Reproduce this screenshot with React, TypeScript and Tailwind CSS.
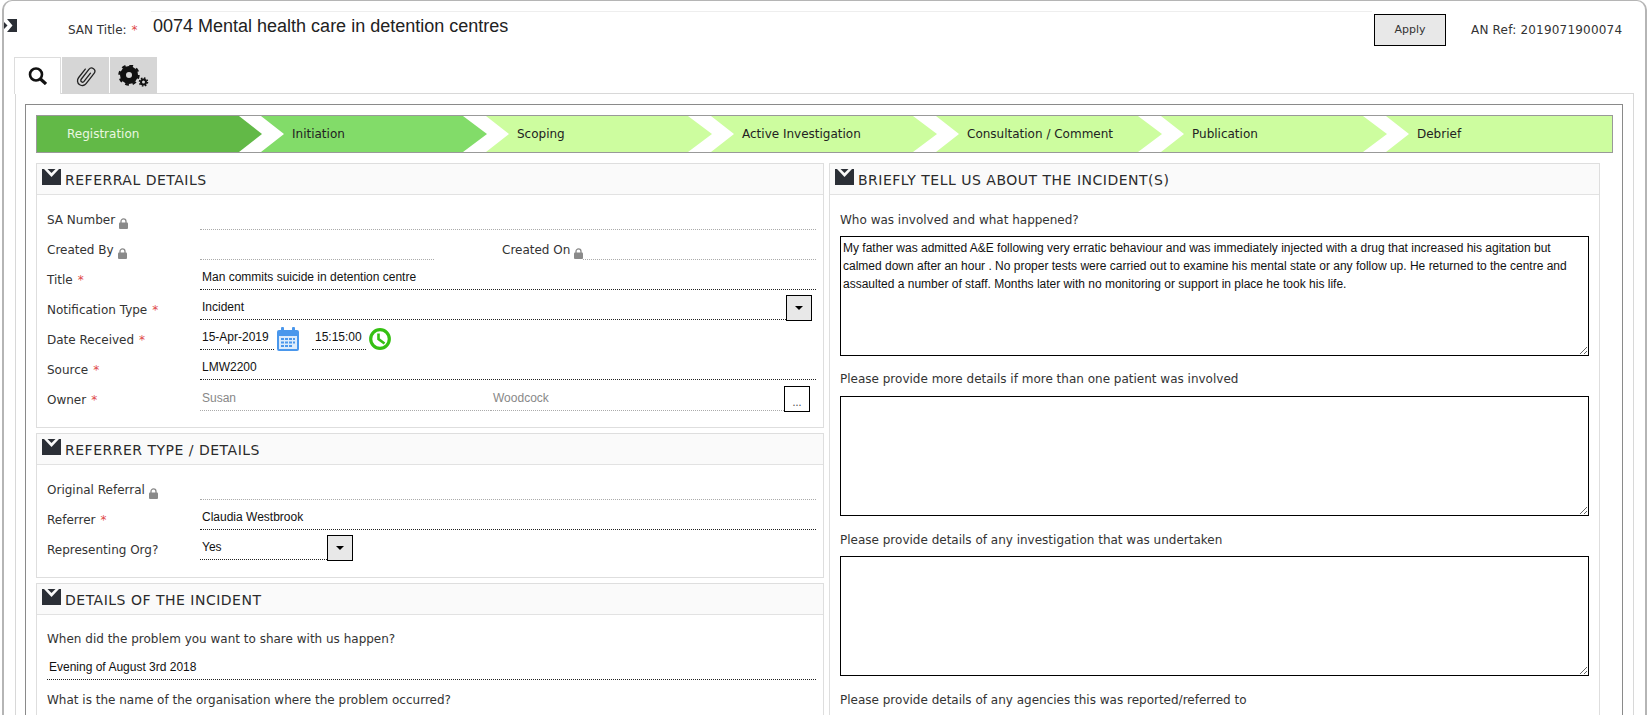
import type { ReactNode } from "react";

const labelFont = "font-['DejaVu_Sans',Verdana,sans-serif]";
const valueFont = "font-['Liberation_Sans',Arial,sans-serif]";

function Req() {
  return <span className="text-[#e04848] ml-[5px]">*</span>;
}

function Lock() {
  return (
    <svg width="9" height="11" viewBox="0 0 9 11" className="inline-block ml-[4px] -mb-[6px]">
      <path d="M2 5V3.4a2.5 2.5 0 0 1 5 0V5" fill="none" stroke="#8a8a8a" strokeWidth="1.3" />
      <rect x="0" y="4.5" width="9" height="6.5" rx="1" fill="#8a8a8a" />
    </svg>
  );
}

function CollapseIcon() {
  return (
    <svg width="19" height="16" viewBox="0 0 19 16" className="shrink-0">
      <path d="M5.500 0H13.500L9.500 4Z" fill="#2b2f36" />
      <path d="M0 0H2L9.500 8L17 0H19V16H0Z" fill="#2b2f36" />
    </svg>
  );
}

function SectionHead({ title }: { title: string }) {
  return (
    <div className="h-[31px] bg-[#fafafa] border-b border-[#e2e2e2] flex items-start pl-[5px] pt-[5px]">
      <CollapseIcon />
      <span className={`${labelFont} ml-[4px] mt-[2px] text-[14px] leading-[18px] tracking-[0.5px] text-[#2b2b2b] whitespace-nowrap`}>{title}</span>
    </div>
  );
}

function Section({ title, className, children }: { title: string; className?: string; children: ReactNode }) {
  return (
    <div className={`border border-[#dedede] ${className ?? ""}`}>
      <SectionHead title={title} />
      {children}
    </div>
  );
}

function Row({ label, required, lock, children }: { label: string; required?: boolean; lock?: boolean; children: ReactNode }) {
  return (
    <div className="h-[30px] flex pl-[10px] pr-[7px]">
      <div className={`${labelFont} w-[153px] shrink-0 pt-[6px] text-[12px] leading-[16px] text-[#333]`}>
        {label}
        {required && <Req />}
        {lock && <Lock />}
      </div>
      {children}
    </div>
  );
}

function Value({ text, strong, grey, className }: { text?: string; strong?: boolean; grey?: boolean; className?: string }) {
  return (
    <div
      className={`${valueFont} h-[24px] pl-[2px] pt-[3px] text-[12px] leading-[16px] border-b border-dotted ${
        strong ? "border-[#222]" : "border-[#aaa]"
      } ${grey ? "text-[#888]" : "text-[#111]"} ${className ?? "flex-1"}`}
    >
      {text}
    </div>
  );
}

function DropBtn() {
  return (
    <div className="w-[26px] h-[26px] -mt-px border border-black bg-[#e8e8e8] flex items-center justify-center shrink-0">
      <div className="w-0 h-0 border-x-[4px] border-x-transparent border-t-[4px] border-t-black" />
    </div>
  );
}

const steps = ["Registration", "Initiation", "Scoping", "Active Investigation", "Consultation / Comment", "Publication", "Debrief"];

function Steps() {
  return (
    <div className={`${labelFont} mt-[10px] ml-[10px] mr-[9px] h-[38px] flex border border-[#999] bg-white text-[12px]`}>
      {steps.map((s, i) => {
        let cls = "w-[226px] -mr-px pl-[31px] bg-[#cdfd9f] text-[#222] [clip-path:polygon(0_0,202px_0,226px_50%,202px_100%,0_100%,23px_50%)]";
        if (i === 0) cls = "w-[225px] -mr-px pl-[30px] bg-[#62b947] text-[#eaf7e0] [clip-path:polygon(0_0,202px_0,225px_50%,202px_100%,0_100%)]";
        if (i === 1) cls = "w-[226px] -mr-px pl-[31px] bg-[#82dc69] text-[#222] [clip-path:polygon(0_0,202px_0,226px_50%,202px_100%,0_100%,23px_50%)]";
        if (i === 6) cls = "flex-1 pl-[31px] bg-[#cdfd9f] text-[#222] [clip-path:polygon(0_0,100%_0,100%_100%,0_100%,23px_50%)]";
        return (
          <div key={s} className={`${cls} flex items-center`}>
            {s}
          </div>
        );
      })}
    </div>
  );
}

function Box({ text, className }: { text?: string; className?: string }) {
  return (
    <textarea
      readOnly
      value={text ?? ""}
      className={`${valueFont} block w-[749px] h-[120px] border border-black px-[2px] pt-[2px] text-[12px] leading-[18px] text-[#111] outline-none ${className ?? ""}`}
    />
  );
}

function Question({ text, className }: { text: string; className?: string }) {
  return <div className={`${labelFont} text-[12px] leading-[16px] text-[#333] ${className ?? ""}`}>{text}</div>;
}

const story =
  "My father was admitted A&E following very erratic behaviour and was immediately injected with a drug that increased his agitation but calmed down after an hour . No proper tests were carried out to examine his mental state or any follow up. He returned to the centre and assaulted a number of staff. Months later with no monitoring or support in place he took his life.";

export default function App() {
  return (
    <div className="h-[715px] overflow-hidden bg-white">
      <div className="h-[740px] mx-[2px] border-x-2 border-t border-[#b5b5b5] rounded-t-[10px]">
        <div className="h-[52px] flex items-start">
          <svg width="13" height="13" viewBox="0 0 13 13" className="mt-[18px] shrink-0">
            <path d="M0 3L3.500 6.500L0 10Z" fill="#2b2f36" />
            <path d="M3 0H13V13H3L8.500 6.500Z" fill="#2b2f36" />
          </svg>
          <div className={`${labelFont} w-[134px] shrink-0 pl-[51px] pt-[21px] text-[12px] leading-[16px] text-[#333] whitespace-nowrap`}>
            SAN Title:<Req />
          </div>
          <div className={`${valueFont} w-[1221px] shrink-0 h-[38px] mt-[10px] border-t border-[#eee] pl-[2px] pt-[3px] text-[18px] leading-[22px] text-[#222]`}>
            0074 Mental health care in detention centres
          </div>
          <button className={`${labelFont} w-[72px] h-[32px] mt-[13px] ml-[2px] border border-black bg-[#e8e8e8] text-[11px] text-[#333]`}>Apply</button>
          <div className={`${labelFont} ml-[25px] pt-[21px] text-[12px] leading-[16px] tracking-[0.2px] text-[#333] whitespace-nowrap`}>AN Ref: 2019071900074</div>
        </div>
        <div className="mt-[4px] ml-[10px] flex h-[37px] relative z-10">
          <div className="w-[47px] h-[37px] border border-b-0 border-[#ddd] bg-white flex items-start justify-center pt-[9px]">
            <svg width="19" height="18" viewBox="0 0 19 18">
              <circle cx="8" cy="7.500" r="6" fill="none" stroke="#111" strokeWidth="2.600" />
              <path d="M12.500 12L18 17" stroke="#111" strokeWidth="3.200" />
            </svg>
          </div>
          <div className="w-[47px] h-[37px] ml-px bg-[#d6d6d6] flex items-start justify-center pt-[7px]">
            <svg width="24" height="24" viewBox="-12 -12 24 24">
              <path
                d="M1.800 -5V5.500A1.800 1.800 0 0 1 -1.800 5.500V-7A3.300 3.300 0 0 1 4.800 -7V6A4.800 4.800 0 0 1 -4.800 6V-5"
                transform="rotate(38)"
                fill="none"
                stroke="#222"
                strokeWidth="1.300"
                strokeLinecap="round"
              />
            </svg>
          </div>
          <div className="w-[47px] h-[37px] ml-px bg-[#d6d6d6] flex items-start pt-[8px] pl-[8px]">
            <svg width="31" height="24" viewBox="0 0 31 24">
              <circle cx="11" cy="10" r="6" fill="none" stroke="#111" strokeWidth="6" />
              <circle cx="11" cy="10" r="9.500" fill="none" stroke="#111" strokeWidth="2.400" strokeDasharray="3.730 3.730" />
              <circle cx="25.500" cy="17" r="2.500" fill="none" stroke="#111" strokeWidth="2" />
              <circle cx="25.500" cy="17" r="4" fill="none" stroke="#111" strokeWidth="1.500" strokeDasharray="1.570 1.570" />
            </svg>
          </div>
        </div>
        <div className="-mt-px ml-[11px] mr-[11px] h-[640px] border border-[#d8d8d8] pt-[10px] pl-[9px] pr-[10px]">
          <div className="h-[640px] border border-[#8a8a8a] border-b-0">
            <Steps />
            <div className="flex mt-[10px] ml-[10px] gap-[5px]">
              <div className="w-[788px] shrink-0 flex flex-col gap-[5px]">
                <Section title="REFERRAL DETAILS" className="h-[265px]">
                  <div className="pt-[11px]">
                    <Row label="SA Number" lock><Value /></Row>
                    <Row label="Created By" lock>
                      <Value className="w-[234px]" />
                      <div className={`${labelFont} ml-[68px] pt-[6px] text-[12px] leading-[16px] text-[#333] whitespace-nowrap`}>
                        Created On<Lock />
                      </div>
                      <Value className="flex-1" />
                    </Row>
                    <Row label="Title" required><Value text="Man commits suicide in detention centre" strong /></Row>
                    <Row label="Notification Type" required>
                      <Value text="Incident" strong />
                      <div className="pr-[4px]"><DropBtn /></div>
                    </Row>
                    <Row label="Date Received" required>
                      <Value text="15-Apr-2019" strong className="w-[74px]" />
                      <svg width="22" height="24" viewBox="0 0 22 24" className="ml-[3px] mt-px">
                        <rect x="0" y="3" width="22" height="21" rx="2" fill="#4a97ec" />
                        <rect x="4" y="0" width="3" height="6" rx="1" fill="#4a97ec" />
                        <rect x="15" y="0" width="3" height="6" rx="1" fill="#4a97ec" />
                        <rect x="2" y="9" width="18" height="13" fill="#dcebfb" />
                        <path d="M4 11h3v2H4zM8 11h3v2H8zM12 11h3v2h-3zM16 11h2v2h-2zM4 14.500h3v2H4zM8 14.500h3v2H8zM12 14.500h3v2h-3zM16 14.500h2v2h-2zM4 18h3v2H4zM8 18h3v2H8zM12 18h3v2h-3z" fill="#4a97ec" />
                      </svg>
                      <Value text="15:15:00" strong className="w-[54px] ml-[13px] pl-[3px]" />
                      <svg width="22" height="22" viewBox="0 0 22 22" className="ml-[3px] mt-[2px]">
                        <circle cx="11" cy="11" r="9.300" fill="white" stroke="#35c012" strokeWidth="3.200" />
                        <path d="M9.500 5.500V11L15.500 15.500" fill="none" stroke="#35c012" strokeWidth="2.600" />
                      </svg>
                    </Row>
                    <Row label="Source" required><Value text="LMW2200" strong /></Row>
                    <Row label="Owner" required>
                      <Value text="Susan" grey className="w-[291px] h-[25px] pt-[4px]" />
                      <Value text="Woodcock" grey className="flex-1 h-[25px] pt-[4px]" />
                      <div className="w-[26px] h-[26px] mr-[6px] border border-black bg-white text-center text-[11px] leading-[30px] text-[#555]">...</div>
                    </Row>
                  </div>
                </Section>
                <Section title="REFERRER TYPE / DETAILS" className="h-[145px]">
                  <div className="pt-[11px]">
                    <Row label="Original Referral" lock><Value /></Row>
                    <Row label="Referrer" required><Value text="Claudia Westbrook" strong /></Row>
                    <Row label="Representing Org?">
                      <Value text="Yes" strong className="w-[127px]" />
                      <DropBtn />
                    </Row>
                  </div>
                </Section>
                <Section title="DETAILS OF THE INCIDENT" className="h-[200px]">
                  <div className="pl-[10px] pr-[7px] pt-[16px]">
                    <Question text="When did the problem you want to share with us happen?" />
                    <Value text="Evening of August 3rd 2018" strong className="mt-[9px]" />
                    <Question text="What is the name of the organisation where the problem occurred?" className="mt-[12px]" />
                  </div>
                </Section>
              </div>
              <div className="w-[771px] shrink-0">
                <Section title="BRIEFLY TELL US ABOUT THE INCIDENT(S)" className="h-[600px]">
                  <div className="pl-[10px] pt-[17px]">
                    <Question text="Who was involved and what happened?" />
                    <Box text={story} className="mt-[8px]" />
                    <Question text="Please provide more details if more than one patient was involved" className="mt-[15px]" />
                    <Box className="mt-[9px]" />
                    <Question text="Please provide details of any investigation that was undertaken" className="mt-[16px]" />
                    <Box className="mt-[8px]" />
                    <Question text="Please provide details of any agencies this was reported/referred to" className="mt-[16px]" />
                  </div>
                </Section>
              </div>
            </div>
          </div>
        </div>
      </div>
    </div>
  );
}
